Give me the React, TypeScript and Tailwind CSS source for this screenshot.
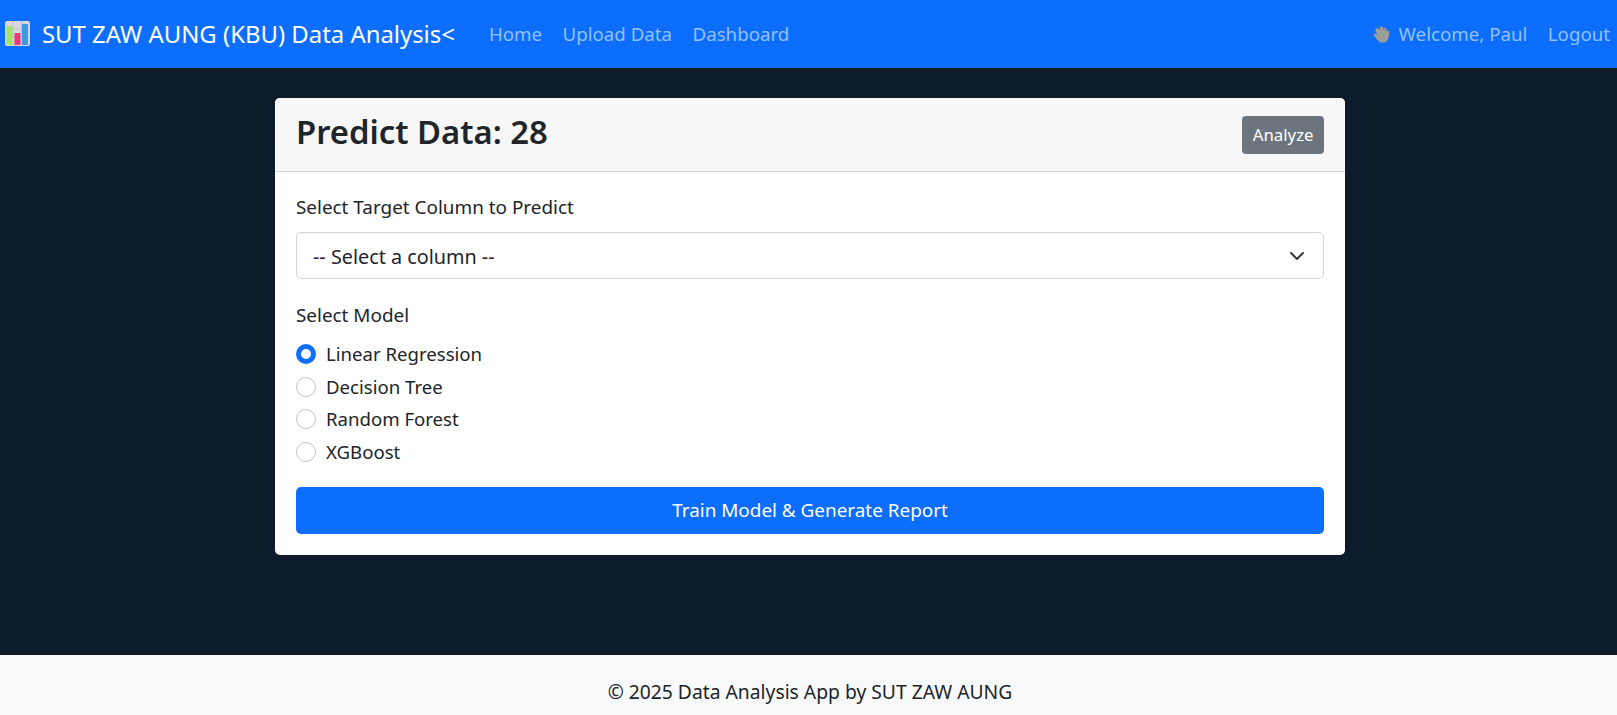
const font = { fontFamily: '"Noto Sans", sans-serif' };

function BrandIcon() {
  return (
    <svg width="25" height="25" viewBox="0 0 25 25" className="shrink-0">
      <rect x="0" y="0" width="25" height="25" rx="2" fill="#d9d7e2" />
      <path d="M8 0V25M16.5 0V25M0 8H25M0 16.5H25" stroke="#c3c0cf" strokeWidth="1" />
      <rect x="1.5" y="5" width="6" height="19" fill="#a6e36a" />
      <rect x="9.5" y="12" width="6" height="12" fill="#e8397b" />
      <rect x="17" y="3" width="6" height="21" fill="#3b9be6" />
    </svg>
  );
}

function WaveIcon() {
  return (
    <svg width="17" height="18" viewBox="0 0 17 18" className="shrink-0">
      <path
        d="M4 3.5 L5 2.6 L7 5.5 L7 2 L8.5 1 L10 2 L10.5 4.8 L12 2.4 L13.5 3.2 L13.5 6 L15.2 5.4 L16.2 6.4 L16 11 L14.5 15.5 L11.5 17.6 L7.5 17.4 L4 14.5 L1 10.5 L0.8 9 L2.2 8.5 L4.2 10 L2.6 6 L2.4 4.4 Z"
        fill="#9a9e96"
      />
    </svg>
  );
}

function Radio({ label, checked }: { label: string; checked?: boolean }) {
  return (
    <label className="flex h-[32.5px] items-center gap-[10px] text-[18.6px] text-[#212529]">
      {checked ? (
        <span className="h-5 w-5 rounded-full border-[5.5px] border-[#0d6efd] bg-white" />
      ) : (
        <span className="h-5 w-5 rounded-full border border-[#bfc3c7] bg-white" />
      )}
      {label}
    </label>
  );
}

export default function App() {
  return (
    <div style={font} className="flex h-[715px] flex-col overflow-hidden bg-[#0d1b2a] text-[#212529]">
      <nav className="flex h-[68px] shrink-0 items-center justify-between bg-[#0d6efd] pl-[5px] pr-[7px]">
        <div className="flex items-center">
          <div className="flex items-center gap-[12px] text-[23.9px] text-white">
            <BrandIcon />
            <span>SUT ZAW AUNG (KBU) Data Analysis&lt;</span>
          </div>
          <div className="ml-[34px] flex gap-[20.5px] text-[18.7px] text-[#93c0ff]">
            <a>Home</a>
            <a>Upload Data</a>
            <a>Dashboard</a>
          </div>
        </div>
        <div className="flex items-center gap-[20.5px] text-[18.7px] text-[#93c0ff]">
          <span className="flex items-center gap-[9px]">
            <WaveIcon />
            Welcome, Paul
          </span>
          <a>Logout</a>
        </div>
      </nav>

      <main className="flex flex-1 justify-center pl-[3px] pt-[30px]">
        <div className="h-[457px] w-[1070px] overflow-hidden rounded-[5px] bg-white">
          <div className="flex h-[74px] items-center justify-between border-b border-[#d8d8d8] bg-[#f7f7f7] px-[21px]">
            <h1 className="pb-[5px] text-[32.8px] font-semibold">Predict Data: 28</h1>
            <button className="h-[38px] rounded-[4px] bg-[#6c757d] px-[10.5px] text-[16.8px] text-white">Analyze</button>
          </div>
          <div className="px-[21px] pt-[21px]">
            <div className="text-[18.9px] leading-[28px]">Select Target Column to Predict</div>
            <div className="mt-[11px] flex h-[47px] items-center justify-between rounded-[5px] border border-[#ced4da] pl-[16px] pr-[18px]">
              <span className="pt-[3px] text-[19.8px]">-- Select a column --</span>
              <svg width="16" height="16" viewBox="0 0 16 16">
                <path d="m2 5 6 6 6-6" fill="none" stroke="#343a40" strokeWidth="2" strokeLinecap="round" strokeLinejoin="round" />
              </svg>
            </div>
            <div className="mt-[22px] text-[18.9px] leading-[28px]">Select Model</div>
            <div className="mt-[9px] flex flex-col">
              <Radio label="Linear Regression" checked />
              <Radio label="Decision Tree" />
              <Radio label="Random Forest" />
              <Radio label="XGBoost" />
            </div>
            <button className="mt-[19px] h-[47px] w-full rounded-[5px] bg-[#0d6efd] text-[18.9px] text-white">
              Train Model &amp; Generate Report
            </button>
          </div>
        </div>
      </main>

      <footer className="flex h-[60px] shrink-0 justify-center bg-[#f8f9fa] pl-[3px] pt-[23px] text-[19.3px] leading-[28px]">
        © 2025 Data Analysis App by SUT ZAW AUNG
      </footer>
    </div>
  );
}
